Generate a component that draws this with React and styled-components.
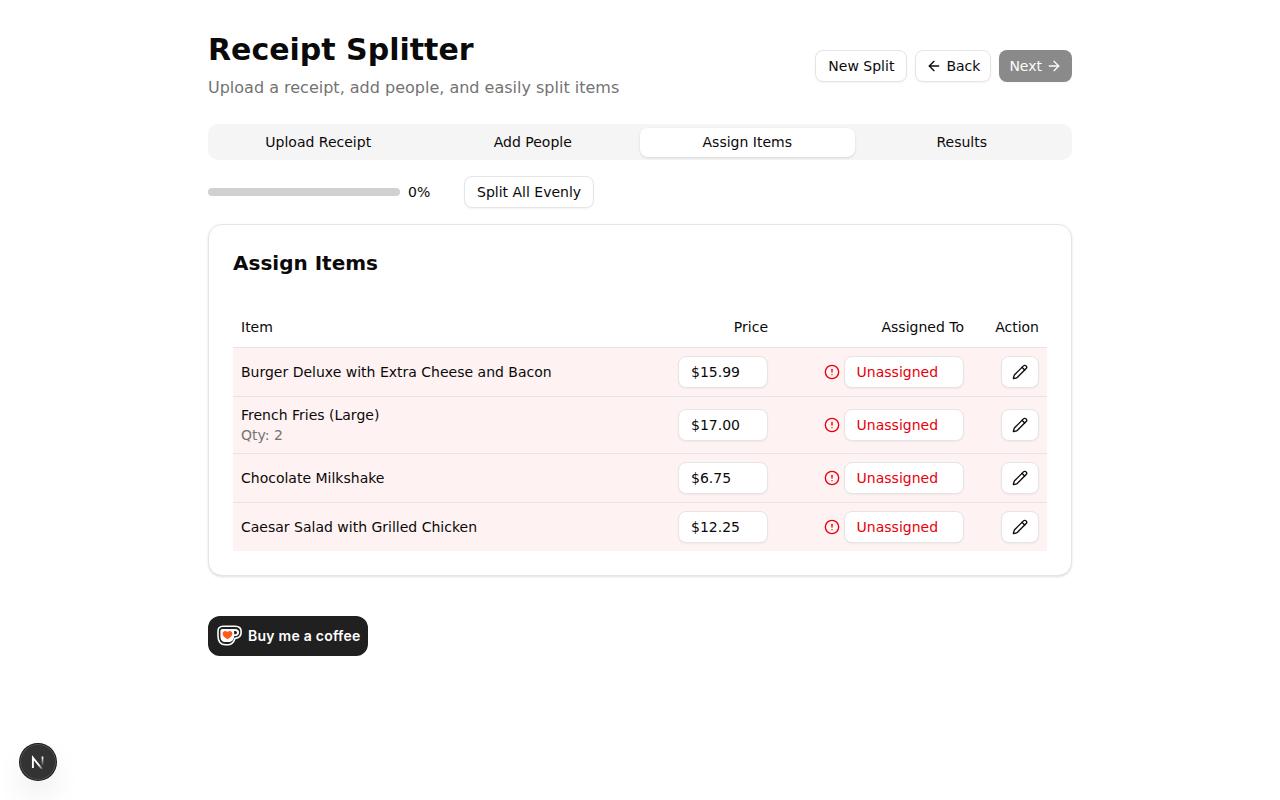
import React from "react";
import styled, { createGlobalStyle, css } from "styled-components";
import { ArrowLeft, ArrowRight, CircleAlert, Pencil } from "lucide-react";

const GlobalStyle = createGlobalStyle`
  *, *::before, *::after { box-sizing: border-box; }
  body {
    margin: 0;
    background: #fff;
    color: #0a0a0a;
    font-family: "DejaVu Sans", sans-serif;
    font-size: 14px;
    line-height: 20px;
  }
  h1, h2, p { margin: 0; }
  button, input { font: inherit; color: inherit; }
`;

const Page = styled.main`
  width: 896px;
  margin: 0 auto;
  padding: 32px 16px;
`;

const Header = styled.header`
  display: flex;
  justify-content: space-between;
  align-items: center;
  margin-bottom: 24px;
`;

const Title = styled.h1`
  font-size: 30px;
  line-height: 36px;
  font-weight: 700;
`;

const Subtitle = styled.p`
  margin-top: 8px;
  font-size: 16px;
  line-height: 24px;
  color: #737373;
`;

const Actions = styled.div`
  display: flex;
  gap: 8px;
`;

const Button = styled.button`
  display: inline-flex;
  align-items: center;
  justify-content: center;
  gap: 4px;
  height: 32px;
  padding: 0 ${(p) => (p.$icon ? 10 : 12)}px;
  border: 1px solid #e5e5e5;
  border-radius: 8px;
  background: #fff;
  box-shadow: 0 1px 2px rgba(0, 0, 0, 0.05);
  white-space: nowrap;
  ${(p) =>
    p.$primary &&
    css`
      border: 0;
      background: #171717;
      color: #fafafa;
      opacity: 0.5;
    `}
`;

const TabList = styled.div`
  display: flex;
  align-items: center;
  height: 36px;
  padding: 3px;
  border-radius: 10px;
  background: #f5f5f5;
`;

const Tab = styled.button`
  flex: 1;
  height: 29px;
  padding: 0;
  border: 1px solid transparent;
  border-radius: 8px;
  background: ${(p) => (p.$active ? "#fff" : "transparent")};
  box-shadow: ${(p) =>
    p.$active ? "0 1px 3px rgba(0,0,0,.1), 0 1px 2px -1px rgba(0,0,0,.1)" : "none"};
`;

const ProgressRow = styled.div`
  display: flex;
  align-items: center;
  margin: 16px 0;
`;

const ProgressTrack = styled.div`
  width: 192px;
  height: 8px;
  border-radius: 4px;
  background: #d0d0d0;
`;

const ProgressLabel = styled.span`
  width: 56px;
  margin-left: 8px;
`;

const Card = styled.section`
  padding: 24px;
  border: 1px solid #e5e5e5;
  border-radius: 14px;
  background: #fff;
  box-shadow: 0 1px 3px rgba(0, 0, 0, 0.1), 0 1px 2px -1px rgba(0, 0, 0, 0.1);
`;

const CardTitle = styled.h2`
  margin-bottom: 30px;
  font-size: 20px;
  line-height: 28px;
  font-weight: 700;
`;

const Table = styled.table`
  width: 100%;
  table-layout: fixed;
  border-spacing: 0;
`;

const Th = styled.th`
  width: ${(p) => p.$width || "auto"};
  height: 41px;
  padding: 0 8px;
  border-bottom: 1px solid #e5e5e5;
  font-weight: 400;
  text-align: ${(p) => p.$align || "left"};
`;

const Td = styled.td`
  padding: 8px;
  text-align: ${(p) => p.$align || "left"};
  vertical-align: middle;
`;

const Row = styled.tr`
  background: #fef2f2;
  &:not(:last-child) > td { border-bottom: 1px solid #e5e5e5; }
`;

const Quantity = styled.div`
  color: #737373;
`;

const PriceInput = styled.input`
  display: block;
  width: 90px;
  height: 32px;
  margin-left: auto;
  padding: 0 12px;
  border: 1px solid #e5e5e5;
  border-radius: 8px;
  background: #fff;
  box-shadow: 0 1px 2px rgba(0, 0, 0, 0.05);
`;

const Assignment = styled.div`
  display: flex;
  align-items: center;
  justify-content: flex-end;
  gap: 4px;
  color: #e7000b;
`;

const AssignButton = styled(Button)`
  width: 120px;
  padding-left: 11.6px;
  justify-content: flex-start;
`;

const EditButton = styled(Button)`
  display: flex;
  width: 38px;
  margin-left: auto;
`;

const CoffeeLink = styled.a`
  display: flex;
  align-items: center;
  width: 160px;
  height: 40px;
  margin-top: 40px;
  padding-left: 8px;
  border-radius: 12px;
  background: #202020;
`;

const CoffeeText = styled.span`
  margin-left: 5px;
  color: #fff;
  font: 600 14px/20px Inter, sans-serif;
  letter-spacing: 0.25px;
  white-space: nowrap;
`;

const DevBadge = styled.div`
  position: fixed;
  left: 20px;
  bottom: 20px;
  display: flex;
  width: 36px;
  height: 36px;
  border-radius: 50%;
  background: #333;
  box-shadow: 0 0 0 1px #171717, inset 0 0 0 1px rgba(255, 255, 255, 0.14),
    0 16px 32px -8px rgba(0, 0, 0, 0.24);
`;

const items = [
  { name: "Burger Deluxe with Extra Cheese and Bacon", price: "$15.99" },
  { name: "French Fries (Large)", price: "$17.00", qty: 2 },
  { name: "Chocolate Milkshake", price: "$6.75" },
  { name: "Caesar Salad with Grilled Chicken", price: "$12.25" },
];

const tabs = ["Upload Receipt", "Add People", "Assign Items", "Results"];

function CupIcon() {
  return (
    <svg width="27" height="24" viewBox="0 0 27 24" fill="none">
      <path d="M7 2.300h12.200c3.600 0 6 2.200 6 5.600 0 3.600-2.500 6.100-6.200 6.500-1.200 3.700-3.500 6.300-7.400 6.300H9.500C4.500 20.700 2 17.500 2 12V7.300c0-3.200 1.900-5 5-5z" fill="#202020" stroke="#fff" strokeWidth="1.600" />
      <path d="M6.500 5h12.600c2.500 0 4 1.300 4 3.400 0 2.300-1.800 3.700-4.800 3.700-.5 3.700-2.100 6-5.600 6H9.700c-3.500 0-5.300-2.100-5.300-5.800V7.100C4.400 5.800 5.200 5 6.500 5z" fill="#fff" />
      <path d="M18.100 6.900v3.400c1.900.1 2.900-.5 2.900-1.800 0-1.100-1-1.700-2.900-1.600z" fill="#202020" />
      <path d="M11.500 15.300c-2.700-1.700-4.900-3.300-4.900-5.600 0-3 3.400-3.700 4.900-1.600 1.500-2.100 4.900-1.400 4.900 1.600 0 2.300-2.200 3.900-4.900 5.600z" fill="#ff5a16" />
    </svg>
  );
}

function NextLogo() {
  return (
    <svg width="36" height="36" viewBox="0 0 36 36" fill="none">
      <defs>
        <linearGradient id="diagonal" x1="20" y1="20" x2="24" y2="25.500" gradientUnits="userSpaceOnUse">
          <stop stopColor="#fff" />
          <stop offset="1" stopColor="#fff" stopOpacity="0" />
        </linearGradient>
        <linearGradient id="stem" x1="22" y1="13" x2="22" y2="22" gradientUnits="userSpaceOnUse">
          <stop stopColor="#fff" />
          <stop offset="1" stopColor="#fff" stopOpacity="0" />
        </linearGradient>
      </defs>
      <path d="M12.900 24V13.700L22 25" stroke="url(#diagonal)" strokeWidth="1.900" />
      <path d="M22.500 12.500v9.500" stroke="url(#stem)" strokeWidth="1.700" />
    </svg>
  );
}

export default function App() {
  return (
    <>
      <GlobalStyle />
      <Page>
        <Header>
          <div>
            <Title>Receipt Splitter</Title>
            <Subtitle>Upload a receipt, add people, and easily split items</Subtitle>
          </div>
          <Actions>
            <Button>New Split</Button>
            <Button $icon><ArrowLeft size={16} />Back</Button>
            <Button $icon $primary>Next<ArrowRight size={16} /></Button>
          </Actions>
        </Header>
        <TabList>
          {tabs.map((t) => <Tab key={t} $active={t === "Assign Items"}>{t}</Tab>)}
        </TabList>
        <ProgressRow>
          <ProgressTrack />
          <ProgressLabel>0%</ProgressLabel>
          <Button>Split All Evenly</Button>
        </ProgressRow>
        <Card>
          <CardTitle>Assign Items</CardTitle>
          <Table>
            <thead>
              <tr>
                <Th>Item</Th>
                <Th $width="120px" $align="right">Price</Th>
                <Th $width="196px" $align="right">Assigned To</Th>
                <Th $width="75px" $align="right">Action</Th>
              </tr>
            </thead>
            <tbody>
              {items.map((item) => (
                <Row key={item.name}>
                  <Td>
                    {item.name}
                    {item.qty && <Quantity>Qty: {item.qty}</Quantity>}
                  </Td>
                  <Td><PriceInput defaultValue={item.price} /></Td>
                  <Td>
                    <Assignment>
                      <CircleAlert size={16} />
                      <AssignButton>Unassigned</AssignButton>
                    </Assignment>
                  </Td>
                  <Td><EditButton $icon aria-label="Edit"><Pencil size={16} /></EditButton></Td>
                </Row>
              ))}
            </tbody>
          </Table>
        </Card>
        <CoffeeLink>
          <CupIcon />
          <CoffeeText>Buy me a coffee</CoffeeText>
        </CoffeeLink>
      </Page>
      <DevBadge><NextLogo /></DevBadge>
    </>
  );
}
